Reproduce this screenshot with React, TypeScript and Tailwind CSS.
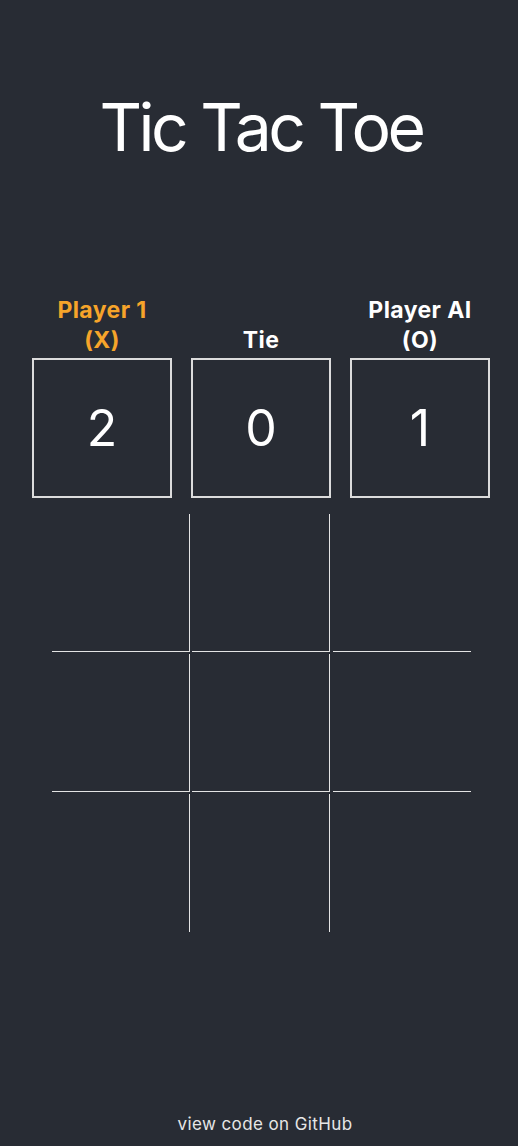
import React from "react";

const scores = [
  { label: ["Player 1", "(X)"], value: 2, active: true },
  { label: ["Tie"], value: 0, active: false },
  { label: ["Player AI", "(O)"], value: 1, active: false },
];

export default function App() {
  const cells = Array.from({ length: 9 }, (_, i) => i);

  return (
    <div className="min-h-screen bg-[#282c34] text-white flex flex-col items-center font-['Inter','Noto_Sans',sans-serif]">
      <h1 className="mt-[94px] pl-[4px] text-[66px] leading-none font-normal tracking-[-3.5px]">Tic Tac Toe</h1>

      <div className="mt-[135px] flex items-end gap-[19px] pl-[4px]">
        {scores.map((s) => (
          <div key={s.value} className="flex flex-col items-center">
            <div
              className={`text-center text-[23px] font-bold leading-[30px] tracking-[0.4px] mb-[3px] ${
                s.active ? "text-[#f6a42a]" : "text-white"
              }`}
            >
              {s.label.map((l) => (
                <div key={l}>{l}</div>
              ))}
            </div>
            <div className="w-[140px] h-[140px] border-2 border-[#dcdcdc] flex items-center justify-center text-[50px] font-normal">
              {s.value}
            </div>
          </div>
        ))}
      </div>

      <div className="mt-[16px] pl-[4px]">
        <div className="grid grid-cols-[repeat(3,138px)] gap-x-[2.5px] gap-y-[2px]">
          {cells.map((i) => (
            <div
              key={i}
              className={`h-[138px] border-[#e4e4e4] ${i % 3 !== 2 ? "border-r" : ""} ${
                i < 6 ? "border-b" : ""
              }`}
            />
          ))}
        </div>
      </div>

      <div className="mt-auto mb-[9px] pl-[12px] text-[17px] tracking-[0.4px] text-[#e6e6e6]">view code on GitHub</div>
    </div>
  );
}
